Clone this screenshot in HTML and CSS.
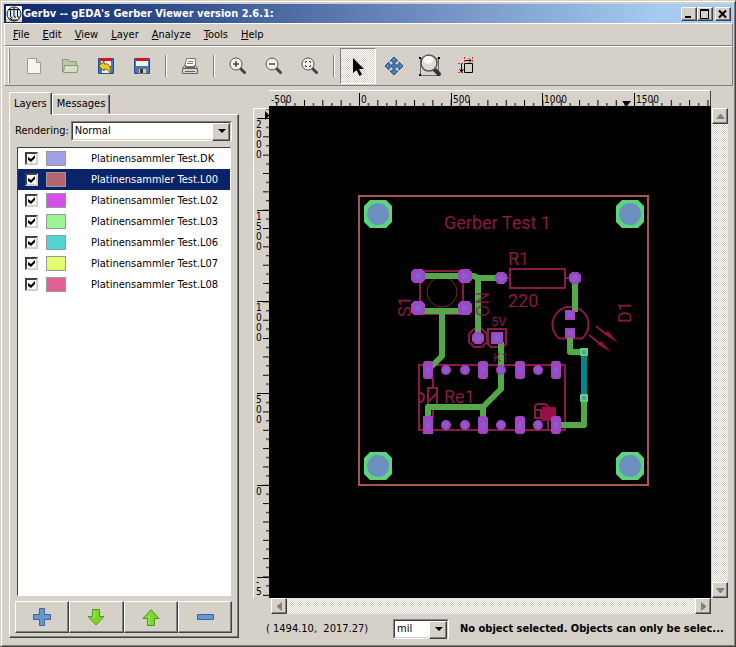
FILE: index.html
```html
<!DOCTYPE html>
<html lang="en">
<head>
<meta charset="utf-8">
<title>Gerbv -- gEDA's Gerber Viewer version 2.6.1:</title>
<link rel="stylesheet" href="styles.css">
</head>
<body>
<div class="window">
  <header class="titlebar">
    <svg class="logo" width="16" height="16" viewBox="0 0 16 16"><path fill="#fff" d="M0 0h16v13H0z"/><path fill="#e5cfa2" d="M0 13h16v3H0z"/><circle cx="8" cy="8" r="7" fill="#d6e7f3" stroke="#111"/><path fill="none" stroke="#111" d="M2 3.500h12M4.500 3v7q0 2 2 2M8 2v8q0 2 2 1M11.500 3v7q0 2 2 1M4 12l2 2h5"/></svg>
    <h1>Gerbv -- gEDA's Gerber Viewer version 2.6.1:</h1>
    <div class="window-buttons">
      <button aria-label="Minimize"><svg width="12" height="10"><path d="M2 7h6v2H2z"/></svg></button>
      <button aria-label="Maximize"><svg width="12" height="10"><path fill="none" stroke="#000" d="M1.500 1v8.500h8V1M1 1.500h9M1 .5h9"/></svg></button>
      <button class="close" aria-label="Close"><svg width="12" height="10"><path fill="none" stroke="#000" stroke-width="2" d="M2 1.500l7 7M9 1.500l-7 7"/></svg></button>
    </div>
  </header>
  <nav class="menubar">
    <button><u>F</u>ile</button><button><u>E</u>dit</button><button><u>V</u>iew</button><button><u>L</u>ayer</button><button><u>A</u>nalyze</button><button><u>T</u>ools</button><button><u>H</u>elp</button>
  </nav>
  <div class="toolbar">
    <span class="grip"></span>
    <button aria-label="New"><svg width="24" height="24"><path fill="#f5f5f2" stroke="#999b94" d="M5.500 4.500h9l4 4v11h-13z"/><path fill="#ddd" stroke="#999b94" d="M14.500 4.500v4h4"/></svg></button>
    <button aria-label="Open"><svg width="24" height="24"><path fill="#bcc69f" stroke="#8c9975" d="M4.500 18V5.500h6l1 2h7v4"/><path fill="#d7dec4" stroke="#8c9975" d="M5.500 18.500l1-7h13.500l-1 7z"/></svg></button>
    <button aria-label="Revert"><svg width="24" height="24"><path fill="#4279be" stroke="#224d88" d="M4.500 4.500h15v15h-15z"/><path fill="#eee" d="M7 5h10v7H7zM8 14h9v5H8z"/><path fill="#d3141b" d="M6 4h12v3H6z"/><path fill="#eccb31" stroke="#77610c" d="M5 12l5-5v3c6-1 7 4 6 9-1-3-3-4-6-4v2z"/></svg></button>
    <button aria-label="Save"><svg width="24" height="24"><path fill="#4279be" stroke="#224d88" d="M4.500 4.500h15v15h-15z"/><path fill="#f1f1f1" d="M6 5h12v7H6z"/><path fill="#d3141b" d="M6 4h12v3H6z"/><path fill="#ccc" stroke="#777" d="M8.500 14.500h8v5h-8z"/><path fill="#333" d="M10 15h3v4h-3z"/></svg></button>
    <span class="separator"></span>
    <button aria-label="Print"><svg width="24" height="24"><path fill="#fafafa" stroke="#777" d="M8.500 4.500h9v8h-11z"/><path stroke="#777" d="M10 7.500h5M9 9.500h6"/><path fill="#d6d6d2" stroke="#60625f" d="M6.500 11.500l-2 3v5h15v-5l-2-3h-1v2h-9v-2z"/><path stroke="#60625f" d="M5 14.500h14M7 17.500h10"/></svg></button>
    <span class="separator"></span>
    <button aria-label="Zoom in"><svg width="24" height="24"><path stroke="#444" stroke-width="3" stroke-linecap="round" d="M14.500 14.500l4 4"/><circle cx="10" cy="10" r="6" fill="#f0f0ee" stroke="#555"/><path stroke="#444" stroke-width="1.500" d="M7 10h6M10 7v6"/></svg></button>
    <button aria-label="Zoom out"><svg width="24" height="24"><path stroke="#444" stroke-width="3" stroke-linecap="round" d="M14.500 14.500l4 4"/><circle cx="10" cy="10" r="6" fill="#f0f0ee" stroke="#555"/><path stroke="#444" stroke-width="1.500" d="M7 10h6"/></svg></button>
    <button aria-label="Zoom fit"><svg width="24" height="24"><path stroke="#444" stroke-width="3" stroke-linecap="round" d="M14.500 14.500l4 4"/><circle cx="10" cy="10" r="6" fill="#f0f0ee" stroke="#555"/><path fill="none" stroke="#444" d="M7.500 9V7.500H9M11 7.500h1.500V9M12.500 11v1.500H11M9 12.500H7.500V11"/></svg></button>
    <span class="separator"></span>
    <button class="pressed" aria-label="Pointer"><svg width="24" height="24"><path d="M7 4v15l3.500-3 3 6 2.500-1.500-3-5.500h5z"/></svg></button>
    <button aria-label="Pan"><svg width="24" height="24"><path fill="#5689c4" stroke="#204a87" d="M12 3l4 4h-3v4h4V8l4 4-4 4v-3h-4v4h3l-4 4-4-4h3v-4H7v3l-4-4 4-4v3h4V7H8z"/></svg></button>
    <button aria-label="Zoom area"><svg width="24" height="24"><path fill="none" stroke="#000" stroke-dasharray="1 1" d="M2.500 4.500h18v17h-18z"/><path d="M1 3h2v2H1zM20 3h2v2h-2zM1 20h2v2H1zM19 20h2v2h-2z"/><path stroke="#333" stroke-width="4" stroke-linecap="round" d="M17 16l4 4"/><circle cx="11" cy="9" r="8" fill="#d9dcda" stroke="#555" stroke-width="1.500"/><ellipse cx="10" cy="6" rx="5" ry="4" fill="#f5f5f5"/></svg></button>
    <button aria-label="Measure"><svg width="24" height="24"><path fill="none" stroke="#000" d="M10.500 9.500h8v9h-8zM11 6.500h6M15 4.500l2 2-2 2M7.500 10v8M5.500 15l2 3 2-3"/><path fill="none" stroke="#e03030" stroke-dasharray="2 1" d="M10.500 3v6M18.500 3v6M4 9.500h6M4 18.500h6"/></svg></button>
  </div>

  <main class="workspace">
    <aside class="sidebar">
      <div class="tabs" role="tablist">
        <button class="tab active" role="tab" aria-selected="true">Layers</button><button class="tab" role="tab" aria-selected="false">Messages</button>
      </div>
      <section class="panel">
        <div class="rendering">
          <label for="rendering">Rendering:</label>
          <span class="combo"><select id="rendering"><option>Normal</option></select></span>
        </div>
        <ul class="layers">
          <li><input type="checkbox" id="l1" checked><span class="swatch blue"></span><label for="l1">Platinensammler Test.DK</label></li>
          <li class="selected"><input type="checkbox" id="l2" checked><span class="swatch brick"></span><label for="l2">Platinensammler Test.L00</label></li>
          <li><input type="checkbox" id="l3" checked><span class="swatch magenta"></span><label for="l3">Platinensammler Test.L02</label></li>
          <li><input type="checkbox" id="l4" checked><span class="swatch green"></span><label for="l4">Platinensammler Test.L03</label></li>
          <li><input type="checkbox" id="l5" checked><span class="swatch cyan"></span><label for="l5">Platinensammler Test.L06</label></li>
          <li><input type="checkbox" id="l6" checked><span class="swatch yellow"></span><label for="l6">Platinensammler Test.L07</label></li>
          <li><input type="checkbox" id="l7" checked><span class="swatch pink"></span><label for="l7">Platinensammler Test.L08</label></li>
        </ul>
        <div class="layer-actions">
          <button aria-label="Add layer"><svg width="22" height="22"><path fill="#6897cc" stroke="#3767a6" d="M8.500 2.500h5v6h6v5h-6v6h-5v-6h-6v-5h6z"/></svg></button>
          <button aria-label="Move down"><svg width="22" height="22"><path fill="#7ed62c" stroke="#4c9a16" d="M7.500 3.500h7v7h4.500l-8 8.500-8-8.500h4.500z"/><path stroke="#b5ee7c" d="M9 5v7"/></svg></button>
          <button aria-label="Move up"><svg width="22" height="22"><path fill="#7ed62c" stroke="#4c9a16" d="M7.500 19.500h7v-7h4.500l-8-9-8 9h4.500z"/><path stroke="#b5ee7c" d="M9 10v8"/></svg></button>
          <button aria-label="Remove layer"><svg width="22" height="22"><path fill="#6897cc" stroke="#3767a6" d="M3.500 8.500h16v5h-16z"/></svg></button>
        </div>
      </section>
    </aside>

    <section class="viewer">
      <svg class="ruler-x">
        <defs>
          <pattern id="ticks-x" x="88" y="0" width="18.340" height="16" patternUnits="userSpaceOnUse"><path d="M0 9h1v7H0zM9 12h1v4H9z"/></pattern>
        </defs>
        <rect width="100%" height="16" fill="url(#ticks-x)"/>
        <path d="M88 2h1v14h-1zM180 2h1v14h-1zM271 2h1v14h-1zM363 2h1v14h-1zM351 10h9l-4 5h-1z"/>
        <text x="0" y="12">-500</text><text x="90" y="12">0</text><text x="182" y="12">500</text><text x="273" y="12">1000</text><text x="365" y="12">1500</text>
      </svg>
      <svg class="ruler-y">
        <defs>
          <pattern id="ticks-y" x="0" y="9" width="16" height="18.340" patternUnits="userSpaceOnUse"><path d="M9 0h7v1H9zM12 9h4v1h-4z"/></pattern>
        </defs>
        <rect width="16" height="100%" fill="url(#ticks-y)"/>
        <path d="M3 9h13v1H3zM3 101h13v1H3zM3 192h13v1H3zM3 284h13v1H3zM3 376h13v1H3zM3 468h13v1H3zM11 2v9l4-4V6z"/>
        <text x="2" y="19">2</text><text x="2" y="29">0</text><text x="2" y="39">0</text><text x="2" y="49">0</text>
        <text x="2" y="111">1</text><text x="2" y="121">5</text><text x="2" y="131">0</text><text x="2" y="141">0</text>
        <text x="2" y="202">1</text><text x="2" y="212">0</text><text x="2" y="222">0</text><text x="2" y="232">0</text>
        <text x="2" y="294">5</text><text x="2" y="304">0</text><text x="2" y="314">0</text>
        <text x="2" y="386">0</text><text x="2" y="476">-</text><text x="2" y="486">5</text>
      </svg>
      <svg class="board" role="img" aria-label="Circuit board">
        <defs>
          <g id="hole"><path fill="#5bd67d" d="M-8-14H8l6 6V8l-6 6H-8l-6-6V-8z"/><circle r="11" fill="#6c90be"/></g>
          <g id="pad8"><path fill="#a046c0" d="M-4-7h8l3 3v8l-3 3h-8l-3-3v-8z"/><path fill="#8460d8" d="M-3-3h6v6h-6z"/></g>
          <g id="round"><path fill="#a046c0" d="M-3-6h6l3 3v6l-3 3h-6l-3-3v-6z"/><path fill="#8460d8" d="M0-4l4 4-4 4-4-4z"/></g>
          <g id="square"><path fill="#a046c0" d="M-5-5H5V5H-5z"/><path fill="#8460d8" d="M0-3l3 3-3 3-3-3z"/></g>
          <g id="small"><ellipse rx="5" ry="5" fill="#a046c0"/><ellipse rx="2" ry="3" fill="#8460d8"/></g>
          <g id="tall"><rect x="-5" y="-9" width="10" height="18" rx="3" fill="#a046c0"/><ellipse rx="2" ry="3" fill="#8460d8"/></g>
          <g id="via"><rect x="-4" y="-4" width="8" height="8" rx="1" fill="#5bd67d"/><path fill="#6c90be" d="M-2-2h4v4h-4z"/></g>
        </defs>
        <g transform="translate(-269 -106)">
          <path fill="none" stroke="#a8544f" stroke-width="2" d="M359 196h289v289H359z"/>
          <use href="#hole" x="378" y="214"/><use href="#hole" x="630" y="214"/><use href="#hole" x="378" y="466"/><use href="#hole" x="630" y="466"/>
          <g class="silk">
            <path d="M420 271h43v43h-43zM510 269h55v19h-55zM505 278h5M565 278h6M419 365h146v65H419zM474 329h8l5 5v8l-5 5h-8l-5-5v-8zM491 329h15v15l-3 3h-12l-3-3v-15zM559 338.500A18 18 0 1 1 582 338.500z"/>
            <path d="M433 378v10M428 388h9v19h-9zM428 402l9-9M433 407v10M419 393h2q3 1 3 4t-3 5h-2M596 326l10 8M589 335l10 8"/>
            <circle class="fine" cx="442" cy="292" r="15"/>
            <path d="M535 419v-12q0-3 4-3h6q3 1 4 5M535 410h10M535 418h6v-7M548 420v9"/>
          </g>
          <path fill="#960f46" d="M542 407h14v14h-14zM604 334l4-3 10 12zM597 344l4-3 10 11z"/>
          <path class="trace" d="M418 276h56l4 2h23M478 278v60M418 311h47M442 311v45l-13 13M501 342v47l-18 18h-55v18M483 407v18M575 278v34M570 333v19h14M584 398v27h-28"/>
          <path stroke="#008888" stroke-width="6" d="M584 352v46"/>
          <use href="#via" x="584" y="352"/><use href="#via" x="584" y="398"/>
          <use href="#pad8" x="418" y="276"/><use href="#pad8" x="465" y="276"/><use href="#pad8" x="418" y="308"/><use href="#pad8" x="465" y="308"/>
          <use href="#round" x="501" y="278"/><use href="#round" x="575" y="278"/><use href="#round" x="478" y="338"/>
          <path fill="#a046c0" d="M491 332h12v12h-12z"/><path fill="#8460d8" d="M494 335h6v6h-6z"/>
          <use href="#square" x="570" y="315"/><use href="#square" x="570" y="333"/>
          <use href="#tall" x="428" y="370"/><use href="#small" x="446" y="370"/><use href="#small" x="465" y="370"/><use href="#tall" x="483" y="370"/><use href="#small" x="501" y="370"/><use href="#tall" x="520" y="370"/><use href="#small" x="538" y="370"/><use href="#tall" x="556" y="370"/>
          <path fill="#a046c0" d="M423 416h10v18h-10z"/>
          <use href="#tall" x="428" y="425"/><use href="#small" x="446" y="425"/><use href="#small" x="465" y="425"/><use href="#tall" x="483" y="425"/><use href="#small" x="501" y="425"/><use href="#tall" x="520" y="425"/><use href="#small" x="538" y="425"/><use href="#tall" x="556" y="425"/>
          <g class="legend">
            <text x="444" y="229">Gerber Test 1</text><text x="508" y="265">R1</text><text x="508" y="307">220</text><text x="444" y="403">Re1</text>
            <text transform="translate(631 323) rotate(-90)">D1</text><text transform="translate(411 317) rotate(-90)">S1</text><text transform="translate(489 317) rotate(-90)" class="overlap">ON</text>
            <text class="tiny" x="491" y="326">5V</text><text class="tiny overlap" x="493" y="362">K1</text>
          </g>
        </g>
      </svg>
      <div class="scroll vertical"><button aria-label="Scroll up"><svg width="9" height="5"><path fill="#808080" d="M4 0h1l4 5H0z"/></svg></button><button aria-label="Scroll down"><svg width="9" height="5"><path fill="#808080" d="M0 0h9L5 5H4z"/></svg></button></div>
      <div class="scroll horizontal"><button aria-label="Scroll left"><svg width="5" height="9"><path fill="#808080" d="M5 0v9L0 5V4z"/></svg></button><button aria-label="Scroll right"><svg width="5" height="9"><path fill="#808080" d="M0 0v9l5-4V4z"/></svg></button></div>
      <footer class="status">
        <output>( 1494.10,&nbsp; 2017.27)</output>
        <span class="combo unit"><select aria-label="Unit"><option>mil</option></select></span>
        <strong>No object selected. Objects can only be selec...</strong>
      </footer>
    </section>
  </main>
</div>
</body>
</html>
```
FILE: styles.css
```css
* { box-sizing: border-box; }
body {
  margin: 0;
  background: #d5d0c8;
  color: #000;
  font: 11px/14px "DejaVu Sans Condensed", "DejaVu Sans", sans-serif;
}
button, select, input { margin: 0; padding: 0; font: inherit; color: inherit; border-radius: 0; }
button { background: #d5d0c8; border: 0; }
svg { display: block; flex: none; }

.window {
  display: flex;
  flex-direction: column;
  height: 100vh;
  padding: 2px 2px 2px 3px;
  border: 1px solid;
  border-color: #d5d0c8 #404040 #404040 #d5d0c8;
  box-shadow: inset 1px 1px #fff, inset -1px -1px #808080;
}

.titlebar {
  display: flex;
  align-items: center;
  gap: 1px;
  height: 19px;
  margin-top: 1px;
  padding: 0 2px;
  background: linear-gradient(to right, #0a246a, #a6caf0 90%);
  color: #fff;
}
.titlebar h1 { flex: 1; margin: 0; font-size: 11px; font-weight: bold; white-space: nowrap; }
.window-buttons { display: flex; }
.window-buttons button {
  display: grid;
  place-items: center;
  width: 16px;
  height: 14px;
  border: 1px solid;
  border-color: #fff #404040 #404040 #fff;
  box-shadow: inset -1px -1px #808080;
}
.window-buttons .close { margin-left: 2px; }

.menubar { display: flex; height: 23px; padding: 1px 2px 0; border: 1px solid; border-color: #fff #808080 #808080 #fff; }
.menubar button { padding: 0 7px 0 6px; }

.toolbar {
  display: flex;
  align-items: center;
  height: 40px;
  padding: 1px 3px;
  border: 1px solid;
  border-color: #fff #808080 #808080 #fff;
}
.toolbar button { display: grid; place-items: center; width: 36px; height: 36px; }
.toolbar .pressed {
  background: repeating-conic-gradient(#fff 0 25%, #d5d0c8 0 50%) 0 0 / 2px 2px;
  border: 1px solid;
  border-color: #808080 #fff #fff #808080;
}
.grip { width: 2px; height: 34px; margin-right: 6px; border-left: 1px solid #fff; border-right: 1px solid #808080; }
.separator { width: 2px; height: 22px; margin: 0 5px; border-left: 1px solid #808080; border-right: 1px solid #fff; }

.workspace { display: flex; flex: 1; min-height: 0; padding: 4px 5px 3px; }
.sidebar { display: flex; flex-direction: column; width: 230px; margin: 2px 14px 3px 0; }
.tabs { display: flex; align-items: flex-end; height: 22px; }
.tab {
  height: 20px;
  padding: 0 4px;
  border: 1px solid;
  border-color: #fff #404040 transparent #fff;
  border-radius: 2px 2px 0 0;
  box-shadow: inset -1px 0 #808080;
}
.tab.active { z-index: 1; height: 23px; margin-bottom: -1px; }
.panel {
  display: flex;
  flex: 1;
  flex-direction: column;
  min-height: 0;
  padding: 6px 6px 4px 5px;
  border: 1px solid;
  border-color: #fff #404040 #404040 #fff;
  box-shadow: inset -1px -1px #808080;
}
.rendering { display: flex; align-items: center; gap: 2px; margin-bottom: 6px; }
.rendering .combo { flex: 1; }
.combo { position: relative; display: block; border: 1px solid; border-color: #808080 #fff #fff #808080; }
.combo select {
  display: block;
  width: 100%;
  height: 18px;
  padding: 0 18px 0 2px;
  border: 1px solid;
  border-color: #404040 #d5d0c8 #d5d0c8 #404040;
  background: #fff;
  appearance: none;
}
.combo::before {
  content: "";
  position: absolute;
  top: 1px;
  right: 1px;
  width: 16px;
  height: 16px;
  background: #d5d0c8;
  border: 1px solid;
  border-color: #fff #404040 #404040 #fff;
  box-shadow: inset -1px -1px #808080;
  pointer-events: none;
}
.combo::after {
  content: "";
  position: absolute;
  top: 7px;
  right: 5px;
  border: 4px solid transparent;
  border-top-color: #000;
  border-bottom: 0;
  pointer-events: none;
}

.layers {
  flex: 1;
  margin: 0 1px 5px 2px;
  padding: 0;
  border: 1px solid;
  border-color: #404040 #fff #fff #404040;
  background: #fff;
  list-style: none;
}
.layers li { display: flex; align-items: center; height: 21px; padding-left: 7px; }
.layers .selected { background: #0a246a; color: #fff; }
.layers input {
  display: grid;
  place-items: center;
  width: 13px;
  height: 13px;
  border: 2px solid;
  border-color: #404040 #d5d0c8 #d5d0c8 #404040;
  background: #fff;
  appearance: none;
}
.layers input:checked::before {
  content: "";
  width: 7px;
  height: 7px;
  background: #000;
  clip-path: polygon(0 2px, 3px 4px, 7px 0, 7px 3px, 3px 7px, 0 5px);
}
.swatch { width: 20px; height: 15px; margin: 0 25px 0 8px; border: 1px solid #999; }
.blue { background: #a0a0e8; }
.brick { background: #b4646e; }
.magenta { background: #d44ee8; }
.green { background: #9cf592; }
.cyan { background: #50d4d4; }
.yellow { background: #e0ff70; }
.pink { background: #e06096; }

.layer-actions { display: grid; grid-template-columns: repeat(4, 1fr); }
.layer-actions button {
  display: grid;
  place-items: center;
  height: 32px;
  border: 1px solid;
  border-color: #fff #404040 #404040 #fff;
  box-shadow: inset -1px -1px #808080;
}

.viewer {
  display: grid;
  flex: 1;
  grid-template-columns: 16px 1fr 17px;
  grid-template-rows: 16px 1fr 16px 27px;
  min-width: 0;
}
.ruler-x, .ruler-y, .board { width: 100%; height: 100%; overflow: hidden; }
.ruler-x { grid-area: 1 / 2; border-top: 1px solid #fff; border-right: 1px solid #404040; padding-left: 2px; }
.ruler-y { grid-area: 2 / 1; height: calc(100% - 2px); margin-top: 2px; border-top: 1px solid #fff; border-left: 1px solid #fff; }
.ruler-x text, .ruler-y text { font-size: 10px; }
.board { grid-area: 2 / 2; min-height: 0; background: #000; }
.trace { fill: none; stroke: #54a848; stroke-width: 6px; stroke-linejoin: round; }
.silk { fill: none; stroke: #8a1848; stroke-width: 2px; }
.silk .fine { stroke-width: 1px; }
.legend { fill: #8a1848; font-family: Roboto, sans-serif; font-size: 18px; }
.legend .tiny { font-size: 13px; }
.legend .overlap { opacity: .8; }

.scroll {
  display: flex;
  justify-content: space-between;
  background: repeating-conic-gradient(#fff 0 25%, #d5d0c8 0 50%) 0 0 / 2px 2px;
}
.scroll.vertical { grid-area: 2 / 3; flex-direction: column; margin: 2px 0 0 1px; }
.scroll.horizontal { grid-area: 3 / 2; margin-left: 2px; }
.scroll button {
  display: grid;
  place-items: center;
  width: 16px;
  height: 16px;
  border: 1px solid;
  border-color: #fff #404040 #404040 #fff;
  box-shadow: inset -1px -1px #808080;
}
.status { grid-area: 4 / 1 / 5 / 4; display: flex; align-items: center; min-width: 0; padding: 2px 4px 0 13px; }
.status output { width: 127px; white-space: nowrap; }
.unit { flex: none; width: 56px; margin-right: 11px; }
.status strong { flex: 1; overflow: hidden; font-size: 11px; text-overflow: ellipsis; white-space: nowrap; }
```
